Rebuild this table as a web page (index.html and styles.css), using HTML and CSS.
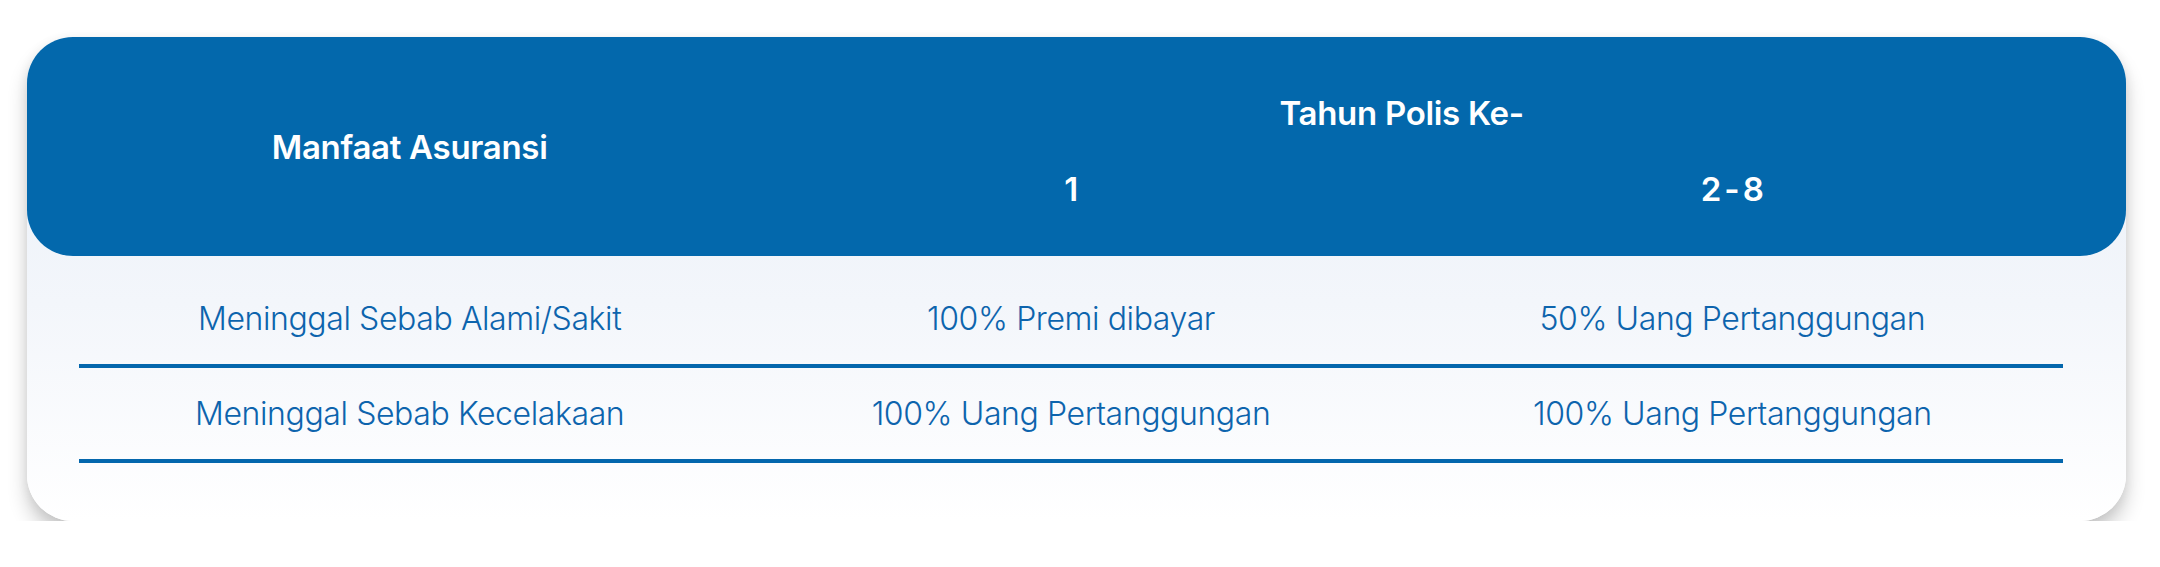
FILE: index.html
```html
<!DOCTYPE html>
<html lang="id">
<head>
<meta charset="utf-8">
<title>Manfaat Asuransi</title>
<link rel="stylesheet" href="styles.css">
</head>
<body>
<div class="page">
  <section class="card">
    <div class="head">
      <div class="hcell benefit">Manfaat Asuransi</div>
      <div class="hcell years">Tahun Polis Ke-</div>
      <div class="hcell">1</div>
      <div class="hcell range">2-8</div>
    </div>
    <div class="rows">
      <div class="row">
        <div class="cell">Meninggal Sebab Alami/Sakit</div>
        <div class="cell">100% Premi dibayar</div>
        <div class="cell">50% Uang Pertanggungan</div>
      </div>
      <div class="row">
        <div class="cell">Meninggal Sebab Kecelakaan</div>
        <div class="cell">100% Uang Pertanggungan</div>
        <div class="cell">100% Uang Pertanggungan</div>
      </div>
    </div>
  </section>
</div>
</body>
</html>
```
FILE: styles.css
```css
* { box-sizing: border-box; }
html, body { margin: 0; padding: 0; background: #ffffff; }
body { font-family: Inter, "Noto Sans", sans-serif; }

.page {
  padding: 37px 0 0 27px;
}

.card {
  width: 2099px;
  border-radius: 46px;
  background: linear-gradient(180deg, #e9eff7 0%, #f3f6fb 55%, #ffffff 100%);
  box-shadow: 0 14px 20px rgba(0, 0, 0, 0.2), 0 2px 12px rgba(0, 0, 0, 0.07);
}

.head {
  height: 219px;
  background: #0368ac;
  border-radius: 46px;
  padding: 39px 63px 29px 52px;
  display: grid;
  grid-template-columns: repeat(3, 1fr);
  grid-template-rows: 75px 76px;
  color: #ffffff;
  font-weight: 600;
  font-size: 33px;
  letter-spacing: -0.3px;
}

.hcell {
  display: flex;
  align-items: center;
  justify-content: center;
  line-height: 1;
}

.benefit {
  grid-row: 1 / 3;
  grid-column: 1;
  padding-bottom: 9px;
}

.years {
  grid-column: 2 / 4;
}

.range {
  letter-spacing: 3px;
  padding-left: 3px;
}

.rows {
  padding: 17px 63px 58px 52px;
}

.row {
  display: grid;
  grid-template-columns: repeat(3, 1fr);
  height: 95px;
  border-bottom: 4px solid #0467ad;
}

.cell {
  display: flex;
  align-items: center;
  justify-content: center;
  line-height: 1;
  font-size: 32px;
  font-weight: 300;
  letter-spacing: -0.4px;
  color: #0d64ad;
}
```
